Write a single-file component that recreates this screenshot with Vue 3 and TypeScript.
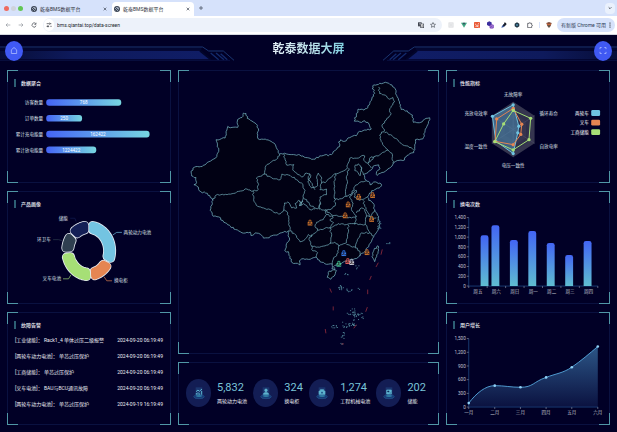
<script setup lang="ts">
type Pt = [number, number]

/* ---------- bar totals ---------- */
const totals = [
  { name: '访客数量', value: '768', w: 228 },
  { name: '订单数量', value: '250', w: 109 },
  { name: '累计充电能量', value: '162422', w: 314 },
  { name: '累计放电能量', value: '1224422', w: 152 },
]

/* ---------- product ring ---------- */
const ringSlices = [
  { name: '两轮动力电池', color: '#73c4e2', from: 0, to: 117, line: '318,73 330,65 346,65', x: 351, y: 65, anchor: 'start' },
  { name: '换电柜', color: '#e58552', from: 117, to: 175, line: '292,200 300,212 316,212', x: 322, y: 212, anchor: 'start' },
  { name: '叉车电池', color: '#a6df76', from: 175, to: 266, line: '191,194 184,206 167,206', x: 161, y: 206, anchor: 'end' },
  { name: '环卫车', color: '#2f3f50', from: 266, to: 311, line: '165,90 153,87 137,87', x: 130, y: 87, anchor: 'end' },
  { name: '储能', color: '#141f56', from: 311, to: 360, line: '207,32 203,22 189,22', x: 182, y: 22, anchor: 'end' },
]

function slicePath(from: number, to: number): string {
  const inset = 13
  const outer = 91 - inset
  const inner = 52 + inset
  const at = (r: number, a: number) => {
    const t = (a * Math.PI) / 180
    return `${(245 + 0.89 * r * Math.sin(t)).toFixed(1)},${(121 - r * Math.cos(t)).toFixed(1)}`
  }
  const trim = (r: number) => (Math.asin((inset + 1) / r) * 180) / Math.PI
  const pts: string[] = []
  const a0 = from + trim(outer)
  const a1 = to - trim(outer)
  const b0 = from + trim(inner)
  const b1 = to - trim(inner)
  for (let i = 0; i <= 16; i++) pts.push(at(outer, a0 + ((a1 - a0) * i) / 16))
  for (let i = 0; i <= 16; i++) pts.push(at(inner, b1 + ((b0 - b1) * i) / 16))
  return 'M' + pts.join('L') + 'Z'
}

/* ---------- alarms ---------- */
const alarms = [
  { text: '[工业储能]： Rack1_4 单体过压二级报警', time: '2024-09-20 06:19:49' },
  { text: '[两轮车动力电池]： 单芯过压保护', time: '2024-09-20 06:19:49' },
  { text: '[工商储能]： 单芯过压保护', time: '2024-09-20 06:19:49' },
  { text: '[叉车电池]： BAU与BCU通讯故障', time: '2024-09-20 06:19:49' },
  { text: '[两轮车动力电池]： 单芯过压保护', time: '2024-09-19 16:19:49' },
]

/* ---------- map ---------- */
function parse(s: string): Pt[] {
  return s.split(' ').map((p) => p.split(',').map(Number) as Pt)
}

/* Breaks straight borders into short uneven steps. */
function border(s: string, closed = false): string {
  const pts = parse(s)
  if (closed) pts.push(pts[0])
  let seed = 7
  const noise = () => {
    seed = (seed * 16807) % 2147483647
    return seed / 2147483647 - 0.5
  }
  let d = `M${pts[0][0]} ${pts[0][1]}`
  for (let i = 1; i < pts.length; i++) {
    const [x0, y0] = pts[i - 1]
    const [x1, y1] = pts[i]
    const len = Math.hypot(x1 - x0, y1 - y0)
    const n = Math.max(1, Math.round(len / 5))
    for (let k = 1; k < n; k++) {
      const o = noise() * 5
      const x = x0 + ((x1 - x0) * k) / n - ((y1 - y0) / len) * o
      const y = y0 + ((y1 - y0) * k) / n + ((x1 - x0) / len) * o
      d += `L${x.toFixed(1)} ${y.toFixed(1)}`
    }
    d += `L${x1} ${y1}`
  }
  return closed ? d + 'Z' : d
}

const mainland = border(
  '47,320 52,305 66,300 80,300 95,288 110,280 124,270 130,250 126,235 122,219 138,216 149,214 152,195 157,179 170,182 187,182 187,158 200,152 204,139 212,140 216,155 230,163 243,172 249,185 246,200 248,216 265,218 283,222 300,233 306,248 313,262 328,260 345,264 370,264 392,273 415,278 440,268 470,264 482,250 494,240 491,226 498,219 510,224 525,213 545,207 550,197 570,190 590,187 583,172 570,162 555,166 538,163 545,145 550,127 568,130 580,122 586,105 597,88 599,70 592,65 598,54 615,49 632,46 652,54 662,66 666,85 675,105 680,128 698,132 714,145 717,167 735,168 750,158 766,153 762,170 752,192 745,217 723,219 721,240 718,258 702,265 685,282 668,282 655,293 640,307 622,318 608,327 605,320 616,305 612,295 600,297 590,310 580,318 566,324 570,337 582,345 586,355 597,347 620,353 617,362 600,370 585,380 578,392 582,402 595,410 600,430 612,450 616,472 610,492 597,512 590,527 582,542 570,557 555,570 540,578 520,584 500,592 485,597 476,602 479,613 471,608 472,594 455,595 435,587 423,573 415,575 400,580 385,578 373,585 375,597 362,592 350,589 345,572 340,557 329,554 333,537 342,524 340,504 343,494 325,498 310,504 295,507 282,515 265,516 255,504 240,500 227,508 225,498 200,500 180,490 165,480 145,468 130,452 113,450 104,432 106,420 112,402 103,388 90,380 76,376 64,360 55,355 63,348 61,333 48,328',
  true,
)
const islands = [
  border('460,620 472,612 485,614 480,627 468,640 457,634', true),
  border('598,552 610,539 612,552 606,572 600,587 592,572', true),
]
const provinces = [
  '313,262 308,275 290,285 272,298 268,323 243,335 250,355 246,373 233,374',
  '112,402 122,386 150,384 170,382 195,374 215,368 233,374',
  '233,374 235,400 243,417 265,425 290,432 300,440 315,443 326,430',
  '268,323 290,335 315,340 320,323 345,327 365,340 380,350 390,372 385,395 378,410 370,402 360,412 365,425 350,425 338,407 328,410 326,430 338,440 342,470 345,494',
  '325,262 330,280 335,296 356,294 353,310 365,320 380,332 395,320 404,322 400,340 412,352 420,370',
  '372,405 378,418 384,404 372,418 385,412 395,418 405,430 420,428',
  '404,322 406,334 398,347 410,365 428,358 425,335 430,320 438,330 440,350 435,370 455,368 455,385 435,392 436,408 428,428 405,418 395,400 385,395',
  '440,350 455,345 465,335 480,322 495,318 515,308 520,290 525,275 545,275 560,268 570,268 568,282 578,290 590,280 600,270 615,265 630,256 640,250',
  '482,322 478,350 480,380 478,395 490,400 515,390 532,380 545,372',
  '522,305 515,330 518,350 512,375 515,390',
  '532,380 540,360 555,348 575,342',
  '540,300 550,292 558,300 560,312 556,328 550,318 540,312 540,300',
  '558,300 562,315 566,324',
  '612,60 615,80 632,85 645,97 655,92 660,105 650,118 645,130 648,145 635,160 622,175 630,190',
  '630,198 640,200 655,210 670,220 685,235 700,238 718,250',
  '630,190 615,205 620,225 630,240 640,250 652,260 655,290',
  '600,268 585,275 580,290 590,305',
  '545,372 538,392 555,402 578,392',
  '478,395 482,415 470,428 455,432 450,436',
  '450,430 470,446 500,450 530,455 545,450',
  '532,380 525,395 535,410 530,430 545,450 540,475',
  '565,402 570,420 580,440 590,455 605,455',
  '545,440 560,425 570,430 575,445 572,475',
  '436,408 432,428 450,432 455,445 445,460 425,468 420,480 428,492 450,486 465,485 490,472 515,475 540,472 572,475 585,500 597,510',
  '455,445 475,452 465,462 476,470 465,485',
  '345,494 360,505 375,527 390,520 400,505 410,510 428,492',
  '410,505 402,520 410,540 428,543 445,540 480,528 492,540 490,560 475,580 472,594',
  '410,540 410,550 428,560 423,573',
  '465,485 470,510 466,532',
  '520,476 520,500 515,530 492,540',
  '585,500 560,500 545,530 542,545 515,535',
  '542,545 555,555 555,570',
  '575,452 590,448 600,432',
].map((s) => border(s))

const isletCenters: [number, number, number, number, number][] = [
  [498, 665, 8, 8, 12],
  [523, 672, 8, 6, 7],
  [528, 738, 12, 10, 16],
  [548, 750, 16, 12, 18],
  [522, 778, 20, 10, 22],
  [478, 781, 12, 5, 9],
  [503, 808, 5, 9, 8],
  [500, 833, 4, 2, 3],
  [552, 666, 4, 3, 2],
  [545, 602, 9, 5, 4],
  [513, 624, 6, 4, 4],
  [638, 530, 9, 2, 4],
  [612, 470, 5, 20, 14],
]
const islets: Pt[] = []
let seed = 11
const rnd = () => {
  seed = (seed * 16807) % 2147483647
  return seed / 2147483647 - 0.5
}
for (const [cx, cy, rx, ry, n] of isletCenters) {
  for (let i = 0; i < n; i++) islets.push([Math.round(cx + rnd() * 2 * rx), Math.round(cy + rnd() * 2 * ry)])
}
const seaDashes = [
  'M623 550l-4 16', 'M611 590l-7 13', 'M590 630l-5 12', 'M579 671v14', 'M578 724l-5 14',
  'M545 777l-8 11', 'M500 835h7', 'M451 790l2 13', 'M475 722v12', 'M465 668l5 12',
]
const sites = [
  { x: 594, y: 387, c: '#c8702a' },
  { x: 552, y: 392, c: '#c8702a' },
  { x: 520, y: 415, c: '#c8702a' },
  { x: 511, y: 448, c: '#c8702a' },
  { x: 405, y: 470, c: '#c8702a' },
  { x: 591, y: 459, c: '#c8702a' },
  { x: 577, y: 559, c: '#c8702a' },
  { x: 507, y: 562, c: '#2f7cf0' },
  { x: 492, y: 594, c: '#45c795' },
  { x: 519, y: 586, c: '#e05a5a' },
  { x: 531, y: 589, c: '#c3c6d2' },
]

/* ---------- stats ---------- */
const stats = [
  { value: '5,832', name: '两轮动力电池', icon: 'chart' },
  { value: '324', name: '换电柜', icon: 'user' },
  { value: '1,274', name: '工程机械电池', icon: 'case' },
  { value: '202', name: '储能', icon: 'box' },
]

/* ---------- radar ---------- */
const hexagon = (k: number) =>
  ([[0, -84], [65, -42], [65, 42], [0, 84], [-65, 42], [-65, -42]] as Pt[])
    .map(([x, y]) => `${201 + x * k},${120 + y * k}`)
    .join(' ')
const radarRings = [
  { k: 1, c: '#35354f' },
  { k: 0.8, c: '#2f2f4b' },
  { k: 0.6, c: '#35354f' },
  { k: 0.4, c: '#2f2f4b' },
  { k: 0.2, c: '#35354f' },
]
const radarLabels = [
  { t: '无故障率', x: 201, y: 12, a: 'middle' },
  { t: '循环寿命', x: 281, y: 70, a: 'start' },
  { t: '自放电率', x: 281, y: 171, a: 'start' },
  { t: '电压一致性', x: 201, y: 230, a: 'middle' },
  { t: '温度一致性', x: 123, y: 171, a: 'end' },
  { t: '充放电效率', x: 123, y: 70, a: 'end' },
]
const radarSeries = [
  { name: '两轮车', c: '#6fc3e0', fill: 'rgba(80,150,190,.5)', pts: '201,45 218,110 215,130 201,193 148,155 138,80' },
  { name: '叉车', c: '#e58552', fill: 'none', pts: '201,56 227,104 224,135 201,166 146,156 151,88' },
  { name: '工商储能', c: '#a6df76', fill: 'none', pts: '201,62 254,86 249,151 201,182 145,157 172,103' },
]

/* ---------- swap counts ---------- */
const swapTicks = ['1,400', '1,200', '1,000', '800', '600', '400', '200', '0']
const swapBars = [
  { d: '周五', x: 114, top: 74 },
  { d: '周六', x: 147, top: 43 },
  { d: '周日', x: 203, top: 88 },
  { d: '周一', x: 259, top: 61 },
  { d: '周二', x: 315, top: 97 },
  { d: '周三', x: 371, top: 134 },
  { d: '周四', x: 427, top: 91 },
]

/* ---------- user growth ---------- */
const growthTicks = ['1,500', '1,200', '900', '600', '300', '0']
const growth: { m: string; x: number; y: number }[] = [
  { m: '一月', x: 66, y: 216 },
  { m: '二月', x: 145, y: 163 },
  { m: '三月', x: 223, y: 168 },
  { m: '四月', x: 301, y: 138 },
  { m: '五月', x: 379, y: 107 },
  { m: '六月', x: 458, y: 44 },
]
const growthLine = 'M66 216C90 185 117 163 145 163C175 163 195 168 223 168C262 168 262 151 301 138C331 126 350 126 379 107C408 87 432 66 458 44'
</script>

<template>
  <div class="window">
    <div class="tabs">
      <span class="lights"><i class="red"></i><i class="grey"></i><i class="green"></i></span>
      <div v-for="n in 2" :key="n" class="tab" :class="{ active: n === 2 }">
        <svg class="fav" viewBox="0 0 18 18"><circle cx="9" cy="9" r="9" fill="#3c4656" /><path d="M3 9l6-6 6 6M5 13l8-8M9 15l5-5" stroke="#c9d4e6" stroke-width="2" fill="none" /></svg>
        <a href="#" class="tab-name">乾泰BMS数据平台</a>
        <button class="plain" aria-label="关闭标签页"><svg class="ico6" viewBox="0 0 18 18"><path d="M5 5l8 8M13 5l-8 8" stroke="#3b4252" stroke-width="2" /></svg></button>
      </div>
      <button class="plain" aria-label="新建标签页"><svg class="ico6" viewBox="0 0 18 18"><path d="M9 3v12M3 9h12" stroke="#3b4252" stroke-width="2" /></svg></button>
      <button class="chev" aria-label="搜索标签页"><svg class="ico6" viewBox="0 0 18 18"><path d="M5 7l4 4 4-4" stroke="#30343c" stroke-width="2.4" fill="none" /></svg></button>
    </div>
    <div class="toolbar">
      <div class="nav">
        <button class="plain" aria-label="后退"><svg class="ico6" viewBox="0 0 18 18"><path d="M16 9H3M8 4L3 9l5 5" stroke="#8f949c" stroke-width="2" fill="none" /></svg></button>
        <button class="plain" aria-label="前进"><svg class="ico6" viewBox="0 0 18 18"><path d="M2 9h13M10 4l5 5-5 5" stroke="#8f949c" stroke-width="2" fill="none" /></svg></button>
        <button class="plain" aria-label="刷新"><svg class="ico6" viewBox="0 0 18 18"><path d="M14 5a6 6.500 0 1 0 1 6M15 2v5h-5" stroke="#3b4048" stroke-width="2" fill="none" /></svg></button>
      </div>
      <div class="omni">
        <span class="site"><svg class="ico6" viewBox="0 0 18 18"><path d="M2 5h6M13 13h4M8 13H2M16 5h-3" stroke="#30343c" stroke-width="2" /><circle cx="11" cy="5" r="2" fill="none" stroke="#30343c" stroke-width="1.800" /><circle cx="6" cy="13" r="2" fill="none" stroke="#30343c" stroke-width="1.800" /></svg></span>
        <input class="url" aria-label="地址" value="bms.qiantai.top/data-screen" />
        <svg class="ico6" viewBox="0 0 18 18"><rect x="0" y="1" width="11" height="12" fill="#3f444d" /><rect x="8" y="6" width="9" height="11" fill="#fff" stroke="#3f444d" stroke-width="2" /><path d="M3 5h6M6 3v2M4 10l4-5" stroke="#dfe3ea" stroke-width="1.200" fill="none" /><path d="M10 15l2.500-6 2.500 6M11 13h3" stroke="#3f444d" fill="none" /></svg>
        <svg class="ico6" viewBox="0 0 18 18"><path d="M9 1.500l2.200 5 5.300.5-4 3.600 1.200 5.400L9 13.200 4.300 16l1.200-5.400-4-3.600 5.300-.5z" fill="none" stroke="#3b4048" stroke-width="1.800" /></svg>
      </div>
      <div class="exts">
        <svg class="ico6" viewBox="0 0 18 18"><rect x="1" y="1" width="16" height="16" rx="2" fill="#e3e4e6" /><path d="M5 5h8v8H5z" stroke="#f4f4f4" fill="none" /></svg>
        <svg class="ico6" viewBox="0 0 18 18"><path d="M0 2h18L9 17z" fill="#41a883" /><path d="M5 2h8l-4 7z" fill="#34495e" /></svg>
        <svg class="ico6" viewBox="0 0 18 18"><rect width="18" height="18" rx="2" fill="#ea5a37" /><path d="M3 6l4 2M15 4l-4 3M4 13l10-3M7 12l7 3" stroke="#fff" stroke-width="2" /></svg>
        <svg class="ico7" viewBox="0 0 24 26"><path d="M8 0l8 4v9l-8 4-8-4V4z" fill="#3c2f9e" /><rect x="9" y="11" width="14" height="14" rx="4" fill="#6f35b5" /><path d="M13 15h6v6h-6z" fill="none" stroke="#d9c8f0" stroke-width="1.500" /></svg>
        <svg class="ico6" viewBox="0 0 18 18"><path d="M1 17l2-5 8-8 4 4-8 8z" fill="#3a5ca8" /><path d="M9 3l3-2 5 5-3 4z" fill="#15181f" /><path d="M5 10l6-6 4 4-6 6z" fill="#1c2230" /></svg>
        <svg class="ico6" viewBox="0 0 18 18"><path d="M9 1l7 4v8l-7 4-7-4V5z" fill="#213746" /><circle cx="9" cy="9" r="3" fill="#4c8ba8" /></svg>
        <svg class="ico6" viewBox="0 0 18 18"><path d="M2 4h4.500a2 2 0 0 1 4 0H14v4.500a2 2 0 0 1 0 4V17H2z" fill="none" stroke="#30343c" stroke-width="2" /></svg>
        <i class="sep"></i>
        <svg class="ico6" viewBox="0 0 18 18"><path d="M1 3l8-3 8 3-3 9-5 6-5-6z" fill="#7a4a3a" /><path d="M2 4l7 2 7-2-2 5H4z" fill="#c4683c" /><path d="M6 11h6l-3 5z" fill="#3d6b62" /></svg>
      </div>
      <button class="chip">有新版 Chrome 可用<svg class="dots" viewBox="0 0 6 18"><circle cx="3" cy="3" r="1.800" /><circle cx="3" cy="9" r="1.800" /><circle cx="3" cy="15" r="1.800" /></svg></button>
    </div>

    <main class="screen">
      <header class="head">
        <svg class="head-bg" viewBox="0 0 1851 93" preserveAspectRatio="none" aria-hidden="true">
          <defs>
            <linearGradient id="band" x1="0" x2="1"><stop offset="0" stop-color="#070d38" /><stop offset=".35" stop-color="#0e1a5c" /><stop offset="1" stop-color="#101d66" /></linearGradient>
            <linearGradient id="glow" x1="0" x2="1"><stop offset="0" stop-color="#16306f" /><stop offset=".5" stop-color="#1f6a8c" /><stop offset="1" stop-color="#16306f" /></linearGradient>
          </defs>
          <g v-for="s in 2" :key="s" :transform="s === 2 ? 'matrix(-1 0 0 1 1851 0)' : undefined">
            <path d="M0 47H600l32 26H0z" fill="url(#band)" />
            <path d="M0 36H608l18 12h44l32 28" fill="none" stroke="#1a3570" stroke-width="3" />
            <path d="M0 42H604" fill="none" stroke="#0b154c" stroke-width="2" />
            <path d="M600 47l32 26" stroke="#02052a" stroke-width="6" />
            <path d="M632 54l24 20M648 54l24 20M662 56l20 18" stroke="#132a6c" stroke-width="4" />
          </g>
          <path d="M0 76H690M1161 76H1851" stroke="#0d1850" stroke-width="2" />
          <path d="M690 76H1161" stroke="url(#glow)" stroke-width="3" />
        </svg>
        <button class="round" aria-label="首页"><svg class="ico8" viewBox="0 0 24 24"><path d="M4 10l8-7 8 7v11H4z" fill="none" stroke="#a9b8ff" stroke-width="2.500" stroke-linejoin="round" /></svg></button>
        <h1>乾泰数据大屏</h1>
        <button class="round" aria-label="全屏"><svg class="ico8" viewBox="0 0 24 24"><path d="M3 8V3h5M16 3h5v5M21 16v5h-5M8 21H3v-5" fill="none" stroke="#a9b8ff" stroke-width="2.500" /></svg></button>
      </header>

      <div class="board">
        <div class="col thirds">
          <section class="panel">
            <h2>数据聚合</h2>
            <svg class="plot" viewBox="0 0 492 273">
              <defs><linearGradient id="hb"><stop offset="0" stop-color="#4564f6" /><stop offset="1" stop-color="#77d6e0" /></linearGradient></defs>
              <g v-for="(t, i) in totals" :key="t.name">
                <text x="107" :y="43 + i * 48" text-anchor="end">{{ t.name }}</text>
                <rect x="116" :y="28 + i * 48" :width="t.w" height="20" rx="9" fill="url(#hb)" />
                <text class="white" :x="116 + t.w / 2" :y="43 + i * 48" text-anchor="middle">{{ t.value }}</text>
              </g>
            </svg>
          </section>
          <section class="panel">
            <h2>产品画像</h2>
            <svg class="plot" viewBox="0 0 492 273">
              <g v-for="s in ringSlices" :key="s.name" stroke-linejoin="round">
                <polyline :points="s.line" fill="none" :stroke="s.color" stroke-width="2" />
                <path :d="slicePath(s.from, s.to)" stroke="#e6ebf3" stroke-width="28" />
                <path :d="slicePath(s.from, s.to)" :fill="s.color" :stroke="s.color" stroke-width="23" />
                <text :x="s.x" :y="s.y + 5" :text-anchor="s.anchor">{{ s.name }}</text>
              </g>
            </svg>
          </section>
          <section class="panel">
            <h2>故障告警</h2>
            <ul class="alarms">
              <li v-for="(a, i) in alarms" :key="i"><span>{{ a.text }}</span><time>{{ a.time }}</time></li>
            </ul>
          </section>
        </div>

        <div class="col">
          <section class="panel map">
            <svg viewBox="10 12 781 849" role="img" aria-label="站点分布">
              <g fill="#010114" stroke="#6fa9b6" stroke-width="2.400" stroke-linejoin="round">
                <path :d="mainland" />
                <path v-for="(d, i) in islands" :key="i" :d="d" />
              </g>
              <g fill="none" stroke="#6fa9b6" stroke-width="2.200">
                <path v-for="(d, i) in provinces" :key="i" :d="d" />
              </g>
              <rect v-for="(p, i) in islets" :key="i" :x="p[0]" :y="p[1]" width="3" height="3" fill="#4f8496" />
              <path v-for="d in seaDashes" :key="d" :d="d" stroke="#7a2438" stroke-width="3" />
              <g v-for="s in sites" :key="s.x" :transform="`translate(${s.x} ${s.y})`">
                <path d="M-3 -3v-5h6v5" fill="none" :stroke="s.c" stroke-width="2.500" />
                <rect x="-7" y="-3" width="14" height="11" :fill="s.c" />
                <path d="M-5 3h4M2 4h4M0 -3v6" stroke="#2a1a20" stroke-width="3" />
              </g>
            </svg>
          </section>
          <section class="panel stats">
            <div v-for="s in stats" :key="s.name" class="stat">
              <span class="orb">
                <svg class="orb-ico" viewBox="0 0 36 42" aria-hidden="true">
                  <ellipse cx="18" cy="32" rx="16" ry="6" fill="#173a78" stroke="#24568a" stroke-width="2" />
                  <ellipse cx="18" cy="30" rx="9" ry="3" fill="#2f7ea0" />
                  <path d="M8 4h20v26H8z" fill="#2e6fae" opacity=".3" />
                  <g fill="#5db4cf" stroke="#5db4cf" stroke-width="2">
                    <path v-if="s.icon === 'chart'" d="M9 17l6-5 4 4 8-7M10 26v-5M15 26v-7M20 26v-4M26 26V15" fill="none" stroke-width="3" />
                    <path v-else-if="s.icon === 'user'" d="M18 9a4 4 0 1 1 0 8a4 4 0 1 1 0-8zM10 25c0-7 16-7 16 0z" />
                    <path v-else-if="s.icon === 'case'" d="M9 15h18v10H9zM13 15v-4h10v4" />
                    <path v-else d="M11 12h14v12H11z" />
                  </g>
                  <path v-if="s.icon === 'case'" d="M15 20h6M18 17v6" stroke="#17407a" stroke-width="2" />
                  <path v-if="s.icon === 'box'" d="M14 15h4v3h-4zM20 21h3" stroke="#17407a" stroke-width="2" />
                </svg>
              </span>
              <div><strong>{{ s.value }}</strong><p>{{ s.name }}</p></div>
            </div>
          </section>
        </div>

        <div class="col thirds">
          <section class="panel">
            <h2>性能指标</h2>
            <svg class="plot" viewBox="0 0 492 273">
              <polygon v-for="r in radarRings" :key="r.k" :points="hexagon(r.k)" :fill="r.c" />
              <path d="M201 36v168M136 78l130 84M266 78l-130 84" stroke="#4a4b66" stroke-width="2" />
              <g v-for="s in radarSeries" :key="s.name">
                <polygon :points="s.pts" :fill="s.fill" :stroke="s.c" stroke-width="3" />
                <circle v-for="p in parse(s.pts)" :key="p.join()" :cx="p[0]" :cy="p[1]" r="5" :fill="s.c" />
              </g>
              <text v-for="l in radarLabels" :key="l.t" :x="l.x" :y="l.y + 5" :text-anchor="l.a">{{ l.t }}</text>
              <g v-for="(s, i) in radarSeries" :key="s.name">
                <text class="white" x="431" :y="75 + i * 29" text-anchor="end">{{ s.name }}</text>
                <rect x="438" :y="61 + i * 29" width="27" height="18" rx="4" :fill="s.c" />
              </g>
            </svg>
          </section>
          <section class="panel">
            <h2>换电次数</h2>
            <svg class="plot dim" viewBox="0 0 492 273">
              <defs><linearGradient id="vb" x2="0" y2="1"><stop offset="0" stop-color="#4365f4" /><stop offset="1" stop-color="#5fbdd0" /></linearGradient></defs>
              <path d="M66 20V228H459" fill="none" stroke="#17386f" stroke-width="3" />
              <g v-for="(t, i) in swapTicks" :key="t">
                <path :d="`M60 ${20 + i * 29.7}h6`" stroke="#8a90a5" stroke-width="2" />
                <text x="57" :y="25 + i * 29.7" text-anchor="end">{{ t }}</text>
              </g>
              <path v-for="i in 8" :key="i" :d="`M${10 + i * 56} 228v6`" stroke="#8a90a5" stroke-width="2" />
              <g v-for="(b, i) in swapBars" :key="b.d">
                <path :d="`M${b.x - 12} 228V${b.top + 7}q0 -7 7 -7h10q7 0 7 7V228z`" fill="url(#vb)" />
                <text :x="94 + i * 56" y="250" text-anchor="middle">{{ b.d }}</text>
              </g>
            </svg>
          </section>
          <section class="panel">
            <h2>用户增长</h2>
            <svg class="plot dim" viewBox="0 0 492 273">
              <defs><linearGradient id="ar" x2="0" y2="1"><stop offset="0" stop-color="#2c5687" /><stop offset="1" stop-color="#0b1240" /></linearGradient></defs>
              <path :d="growthLine + 'V228H66Z'" fill="url(#ar)" />
              <path d="M66 20V228H459" fill="none" stroke="#17386f" stroke-width="3" />
              <g v-for="(t, i) in growthTicks" :key="t">
                <path :d="`M60 ${20 + i * 41.6}h6`" stroke="#8a90a5" stroke-width="2" />
                <text x="57" :y="25 + i * 41.6" text-anchor="end">{{ t }}</text>
              </g>
              <path :d="growthLine" fill="none" stroke="#4f9bd0" stroke-width="3" />
              <g v-for="g in growth" :key="g.m">
                <path :d="`M${g.x} 228v6`" stroke="#8a90a5" stroke-width="2" />
                <circle :cx="g.x" :cy="g.y" r="4" fill="#8fd0f5" />
                <text :x="g.x" y="250" text-anchor="middle">{{ g.m }}</text>
              </g>
            </svg>
          </section>
        </div>
      </div>
    </main>
  </div>
</template>

<style>
body {
  margin: 0;
  background: #010026;
}
</style>

<style scoped>
.window {
  min-height: 100vh;
  display: flex;
  flex-direction: column;
  font-family: Roboto, 'Noto Sans CJK SC', sans-serif;
  font-size: 5px;
  line-height: 8px;
  color: #eceef4;
}
svg { display: block; }
button { font: inherit; color: inherit; border: 0; padding: 0; }
.plain { background: none; display: flex; }
.ico6 { width: 6px; height: 6px; flex: none; }
.ico7 { width: 7px; height: 8px; flex: none; }
.ico8 { width: 8px; height: 9px; }

.tabs {
  height: 16px;
  background: #d6e2fb;
  display: flex;
  align-items: center;
  gap: 4px;
  padding: 0 2px 0 4px;
  box-sizing: border-box;
}
.lights { display: flex; gap: 2px; width: 21px; }
.lights i { width: 5px; height: 5px; border-radius: 50%; }
.red { background: #ee6a5f; }
.grey { background: #cfd3dc; }
.green { background: #62c655; }
.tab {
  width: 82px;
  height: 14px;
  margin-top: 2px;
  box-sizing: border-box;
  padding: 0 3px 0 2px;
  display: flex;
  align-items: center;
  gap: 3px;
  border-radius: 4px 4px 0 0;
}
.tab.active { background: #fff; }
.tab + .tab { margin-left: -3px; }
.fav { width: 6px; height: 6px; flex: none; }
.tab-name { flex: 1; color: #30343c; text-decoration: none; white-space: nowrap; }
.chev {
  margin-left: auto;
  width: 10px;
  height: 11px;
  border-radius: 4px;
  background: #eaf1fd;
  display: grid;
  place-items: center;
}
.toolbar {
  height: 19px;
  box-sizing: border-box;
  border-bottom: 1px solid #d5d9e0;
  background: #fff;
  display: flex;
  align-items: center;
  padding: 0 2px 0 5px;
}
.nav { display: flex; gap: 7px; width: 38px; }
.omni {
  flex: 1;
  height: 14px;
  border-radius: 7px;
  background: #edf2fa;
  display: flex;
  align-items: center;
  gap: 6px;
  padding: 0 6px 0 1px;
}
.site {
  width: 10px;
  height: 12px;
  border-radius: 6px;
  background: #fff;
  display: grid;
  place-items: center;
}
.url {
  flex: 1;
  min-width: 0;
  border: 0;
  padding: 0;
  margin-left: -3px;
  background: none;
  font: inherit;
  color: #23262d;
  outline: 0;
}
.exts { display: flex; align-items: center; gap: 7px; padding: 0 5px 0 6px; }
.sep { width: 1px; height: 6px; margin: 0 -1px; background: #d6e2fb; }
.chip {
  height: 14px;
  padding: 0 4px;
  border-radius: 7px;
  background: #d6e2fb;
  color: #2b3a55;
  display: flex;
  align-items: center;
  gap: 3px;
  white-space: nowrap;
}
.dots { width: 2px; height: 6px; }

.screen { flex: 1; display: flex; flex-direction: column; background: #010026; }
.head {
  position: relative;
  height: 31px;
  display: flex;
  align-items: center;
  justify-content: space-between;
  padding: 0 5px;
}
.head-bg { position: absolute; inset: 0; width: 100%; height: 100%; }
.head h1 {
  position: relative;
  margin: 0 0 3px;
  font-size: 12px;
  line-height: 16px;
  font-weight: 700;
  background: linear-gradient(90deg, #e4eef6, #b5dfe9 60%, #7fd0e2);
  background-clip: text;
  -webkit-background-clip: text;
  color: transparent;
}
.round {
  position: relative;
  width: 18px;
  height: 20px;
  border-radius: 50%;
  background: #4059f3;
  display: grid;
  place-items: center;
}
.board {
  flex: 1;
  display: grid;
  grid-template-columns: 164fr 261fr 164fr;
  gap: 7px;
  padding: 4px 7px 8px;
}
.col { display: flex; flex-direction: column; gap: 8px; min-width: 0; }
.thirds { display: grid; grid-auto-rows: 1fr; }
.panel {
  --c: linear-gradient(#5097a6, #5097a6);
  --e: linear-gradient(#0a1140, #0a1140);
  flex: 1 0 auto;
  box-sizing: border-box;
  padding: 1px;
  background:
    var(--c) 0 0 / 11px 1px,
    var(--c) 0 0 / 1px 12px,
    var(--c) 100% 0 / 11px 1px,
    var(--c) 100% 0 / 1px 12px,
    var(--c) 0 100% / 11px 1px,
    var(--c) 0 100% / 1px 12px,
    var(--c) 100% 100% / 11px 1px,
    var(--c) 100% 100% / 1px 12px,
    var(--e) 0 0 / 100% 1px,
    var(--e) 0 100% / 100% 1px,
    var(--e) 0 0 / 1px 100%,
    var(--e) 100% 0 / 1px 100%;
  background-repeat: no-repeat;
}
.panel h2 {
  margin: 8px 0 3px 6px;
  padding-left: 5px;
  border-left: 2px solid #2d5f74;
  font-size: 5px;
  line-height: 8px;
  font-weight: 500;
}
.plot { width: 100%; }
.plot text { font-size: 14px; fill: #dfe2ea; }
.plot.dim text { fill: #c0c4d0; }
.plot .white { fill: #fff; }
.alarms { list-style: none; margin: 0; padding: 4px 7px 0; }
.alarms li {
  display: flex;
  justify-content: space-between;
  margin-bottom: 8px;
  white-space: nowrap;
}
.alarms li:last-child { margin-bottom: 0; }
.map svg { width: 100%; }
.stats {
  flex: 0 0 63px;
  display: flex;
  align-items: center;
  justify-content: space-between;
  padding: 0 13px 0 8px;
}
.stat { display: flex; align-items: center; gap: 6px; }
.orb {
  width: 25px;
  height: 28px;
  border-radius: 50%;
  background: #131d54;
  display: grid;
  place-items: center;
}
.orb-ico { width: 12px; height: 14px; }
.stat strong { display: block; font-size: 11px; line-height: 13px; font-weight: 400; color: #79c4d8; }
.stat p { margin: 3px 0 0; white-space: nowrap; }
</style>
